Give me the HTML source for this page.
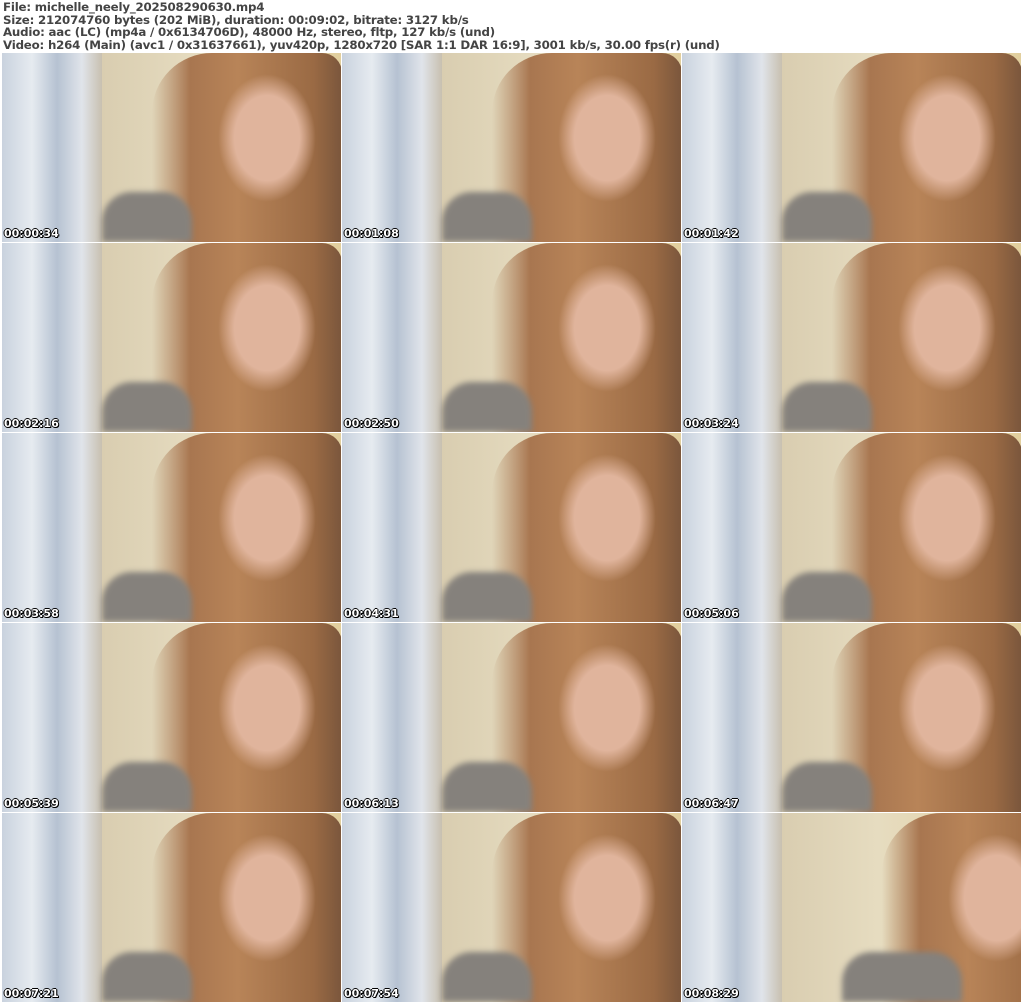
<!DOCTYPE html>
<html><head><style>
body{margin:0;width:1024px;height:1003px;background:#fff;position:relative;overflow:hidden;font-family:"DejaVu Sans","Liberation Sans",sans-serif}
.h{position:absolute;left:3px;top:1px;font-size:11.8px;line-height:12.5px;color:#444;font-weight:bold;letter-spacing:-0.2px}
.t{position:absolute;width:339px;height:189px;overflow:hidden;background:#d8c9a6}
.c{position:absolute;left:0;top:0;width:100px;height:189px;background:linear-gradient(90deg,#c9d2de,#e6ebf0 30%,#b6c2d2 55%,#e0e4ea 80%,#c8c0b0)}
.w{position:absolute;left:100px;top:0;width:239px;height:189px;background:linear-gradient(90deg,#d9cdb0,#e6dcc0 40%,#e2cf9e)}
.hr{position:absolute;left:150px;top:0;width:190px;height:189px;background:radial-gradient(ellipse 65px 85px at 115px 85px,#e0b49c 50%,rgba(224,180,156,0) 75%),linear-gradient(90deg,rgba(160,110,70,0) 0,#a87650 20%,#b88458 45%,#9a6a44 85%,#7a563c);border-radius:60px 20px 0 0}
.s{position:absolute;left:100px;bottom:0;width:90px;height:50px;background:#85817c;border-radius:30px 30px 0 0;filter:blur(3px)}
.ts{position:absolute;left:2px;bottom:2px;color:#fff;font-size:11px;font-weight:bold;text-shadow:1px 0 #000,-1px 0 #000,0 1px #000,0 -1px #000,1px 1px #000}
</style></head><body>
<div class="h">File: michelle_neely_202508290630.mp4<br>Size: 212074760 bytes (202 MiB), duration: 00:09:02, bitrate: 3127 kb/s<br>Audio: aac (LC) (mp4a / 0x6134706D), 48000 Hz, stereo, fltp, 127 kb/s (und)<br>Video: h264 (Main) (avc1 / 0x31637661), yuv420p, 1280x720 [SAR 1:1 DAR 16:9], 3001 kb/s, 30.00 fps(r) (und)</div>
<div class="t" style="left:2px;top:53px"><div class="c"></div><div class="w"></div><div class="hr"></div><div class="s"></div><div class="ts">00:00:34</div></div>
<div class="t" style="left:342px;top:53px"><div class="c"></div><div class="w"></div><div class="hr"></div><div class="s"></div><div class="ts">00:01:08</div></div>
<div class="t" style="left:682px;top:53px"><div class="c"></div><div class="w"></div><div class="hr"></div><div class="s"></div><div class="ts">00:01:42</div></div>
<div class="t" style="left:2px;top:243px"><div class="c"></div><div class="w"></div><div class="hr"></div><div class="s"></div><div class="ts">00:02:16</div></div>
<div class="t" style="left:342px;top:243px"><div class="c"></div><div class="w"></div><div class="hr"></div><div class="s"></div><div class="ts">00:02:50</div></div>
<div class="t" style="left:682px;top:243px"><div class="c"></div><div class="w"></div><div class="hr"></div><div class="s"></div><div class="ts">00:03:24</div></div>
<div class="t" style="left:2px;top:433px"><div class="c"></div><div class="w"></div><div class="hr"></div><div class="s"></div><div class="ts">00:03:58</div></div>
<div class="t" style="left:342px;top:433px"><div class="c"></div><div class="w"></div><div class="hr"></div><div class="s"></div><div class="ts">00:04:31</div></div>
<div class="t" style="left:682px;top:433px"><div class="c"></div><div class="w"></div><div class="hr"></div><div class="s"></div><div class="ts">00:05:06</div></div>
<div class="t" style="left:2px;top:623px"><div class="c"></div><div class="w"></div><div class="hr"></div><div class="s"></div><div class="ts">00:05:39</div></div>
<div class="t" style="left:342px;top:623px"><div class="c"></div><div class="w"></div><div class="hr"></div><div class="s"></div><div class="ts">00:06:13</div></div>
<div class="t" style="left:682px;top:623px"><div class="c"></div><div class="w"></div><div class="hr"></div><div class="s"></div><div class="ts">00:06:47</div></div>
<div class="t" style="left:2px;top:813px"><div class="c"></div><div class="w"></div><div class="hr"></div><div class="s"></div><div class="ts">00:07:21</div></div>
<div class="t" style="left:342px;top:813px"><div class="c"></div><div class="w"></div><div class="hr"></div><div class="s"></div><div class="ts">00:07:54</div></div>
<div class="t" style="left:682px;top:813px"><div class="c"></div><div class="w"></div><div class="hr" style="left:200px"></div><div class="s" style="left:160px;width:120px"></div><div class="ts">00:08:29</div></div>
</body></html>
